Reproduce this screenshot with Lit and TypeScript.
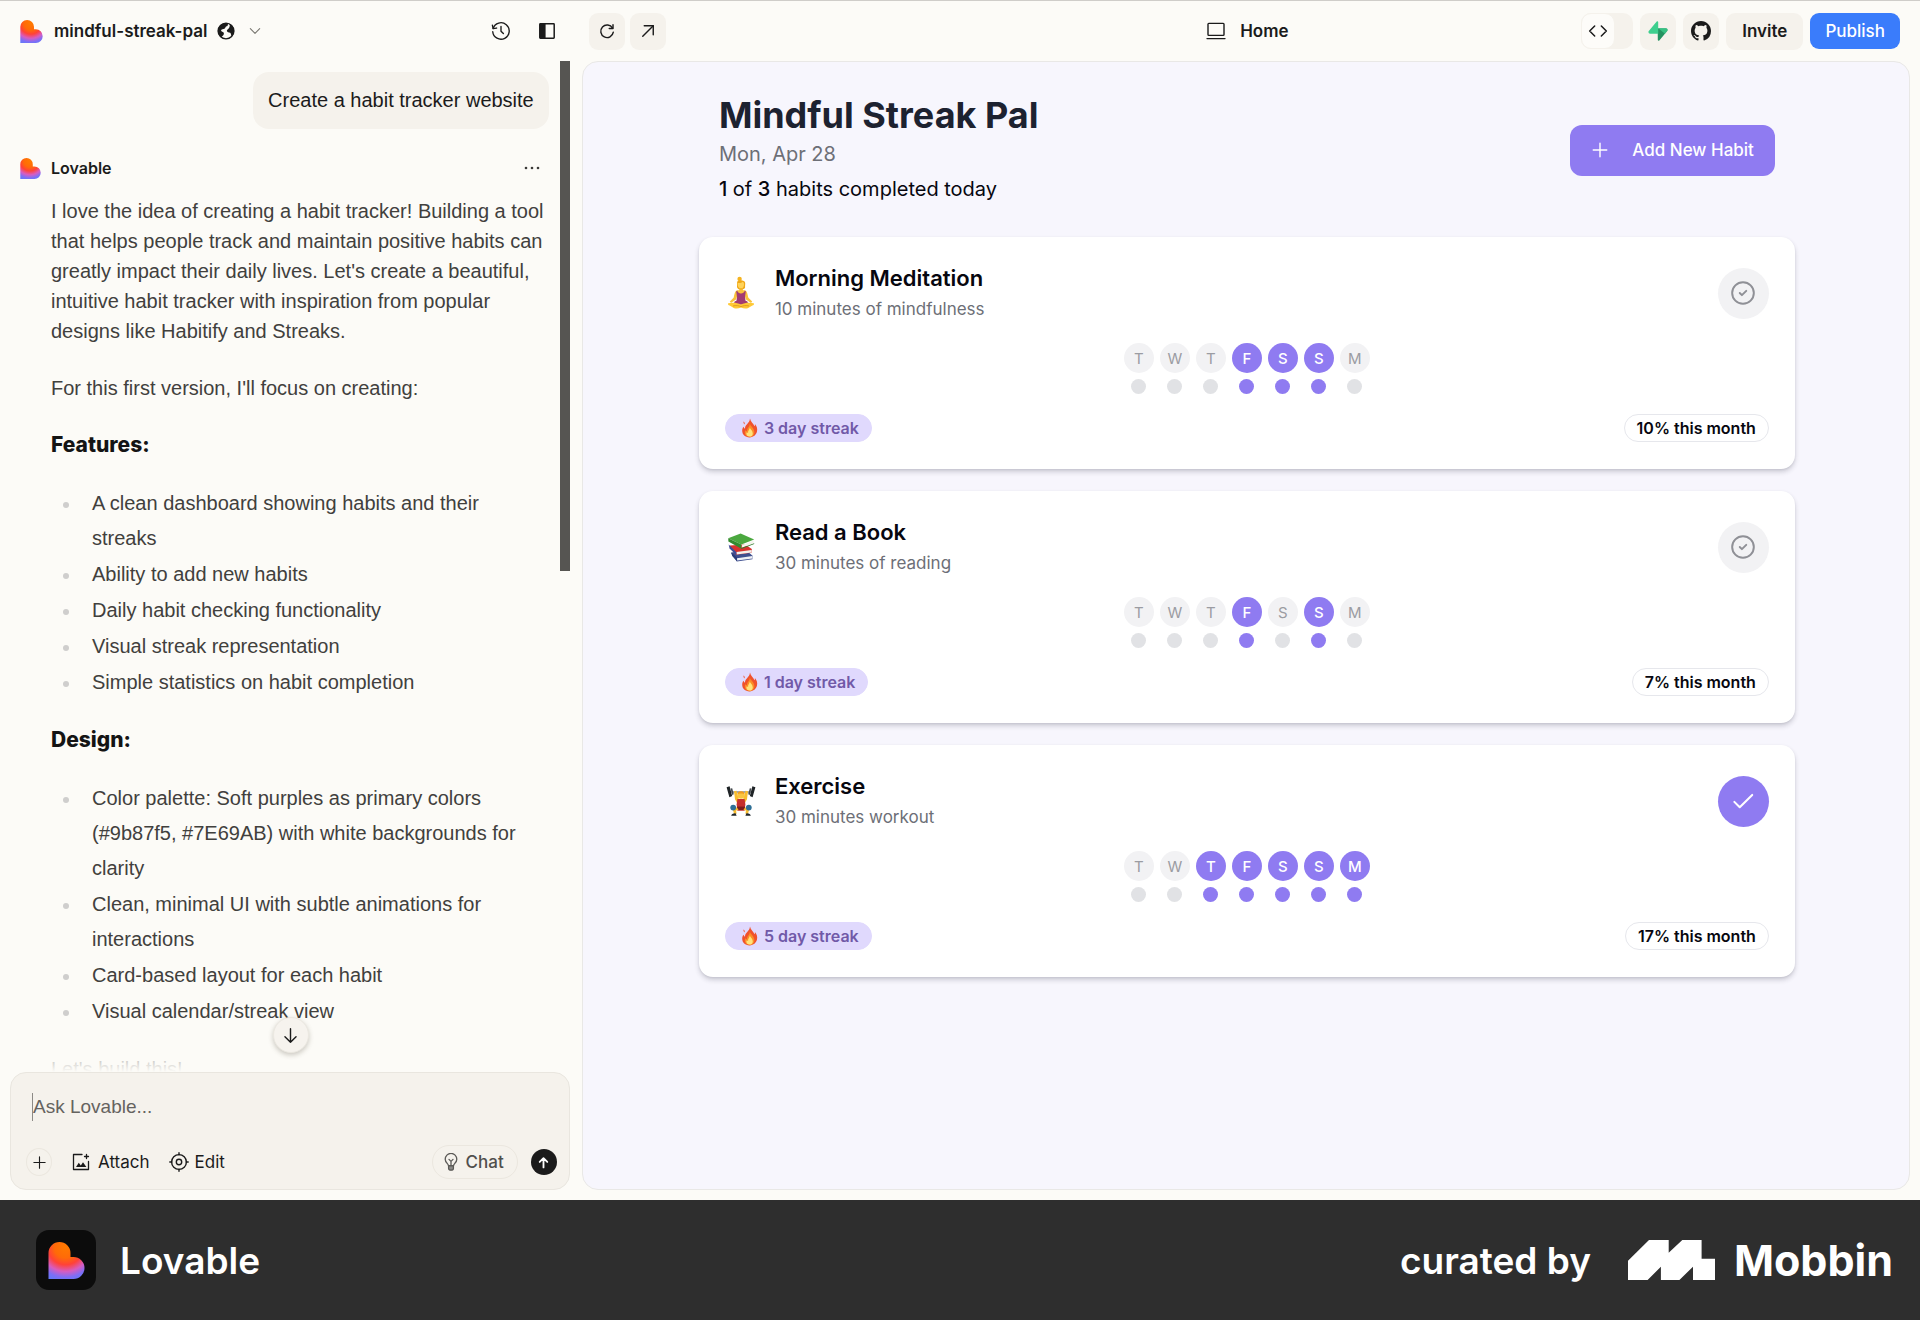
import { LitElement, html, css, svg } from "lit";
import { customElement, property, state } from "lit/decorators.js";
import { classMap } from "lit/directives/class-map.js";

interface Habit {
  icon: "yoga" | "books" | "lifter";
  name: string;
  detail: string;
  days: boolean[];
  streak: number;
  month: number;
  done: boolean;
}

const DAY_LETTERS = ["T", "W", "T", "F", "S", "S", "M"];

const toDays = (pattern: string) => [...pattern].map((c) => c === "x");

const HABITS: Habit[] = [
  { icon: "yoga", name: "Morning Meditation", detail: "10 minutes of mindfulness", days: toDays("...xxx."), streak: 3, month: 10, done: false },
  { icon: "books", name: "Read a Book", detail: "30 minutes of reading", days: toDays("...x.x."), streak: 1, month: 7, done: false },
  { icon: "lifter", name: "Exercise", detail: "30 minutes workout", days: toDays("..xxxxx"), streak: 5, month: 17, done: true },
];

const FEATURES = [
  "A clean dashboard showing habits and their streaks",
  "Ability to add new habits",
  "Daily habit checking functionality",
  "Visual streak representation",
  "Simple statistics on habit completion",
];

const DESIGN = [
  "Color palette: Soft purples as primary colors (#9b87f5, #7E69AB) with white backgrounds for clarity",
  "Clean, minimal UI with subtle animations for interactions",
  "Card-based layout for each habit",
  "Visual calendar/streak view",
];

const stroke = (size: number, body: unknown, width = 1.5) => html`
  <svg width=${size} height=${size} viewBox="0 0 24 24" fill="none" stroke="currentColor"
    stroke-width=${width} stroke-linecap="round" stroke-linejoin="round" aria-hidden="true">${body}</svg>`;

const icons = {
  globe: html`<svg width="18" height="18" viewBox="0 0 20 20" aria-hidden="true">
    <circle cx="10" cy="10" r="8.8" fill="none" stroke="#1b1b1b" stroke-width="1.5"/>
    <path fill="#1b1b1b" d="M10.2 1 C13.2 1.800 12.4 4.2 10.6 4.8 C9.2 5.4 9.4 6.800 8.2 7.6 C7 8.400 5.2 7.800 4.600 9.2 C4.2 10.4 5.6 10.6 6.6 11.2 C7.8 12 8 13.2 7.200 14.4 C6.600 15.4 5.600 15.6 5 17 C2.600 15.4 1 13 1 10 C1 5.2 5.400 .8 10.200 1 Z"/>
    <path fill="#1b1b1b" d="M14 2 C17 3.4 19 6.4 19 10 C19 12.4 18 14.600 16.600 16 C15.200 15 16 12.800 14.600 12 C13 11.200 11.400 11.600 11 10 C10.600 8.400 12.600 7.800 13.400 6.600 C14.200 5.400 14.400 3.600 14 2 Z"/>
  </svg>`,
  chevron: stroke(14, svg`<path d="M4 8l8 8 8-8"/>`, 1.8),
  history: stroke(22, svg`<path d="M3.4 9.2a9 9 0 1 1-.4 3.6"/><path d="M2.6 5.6l.8 3.8 3.8-.6"/><path d="M12 7v5.2l2.6 2.6"/>`),
  panel: html`<svg width="16" height="16" viewBox="0 0 16 16" aria-hidden="true">
    <rect x=".8" y=".8" width="14.4" height="14.4" rx=".6" fill="none" stroke="#1b1b1b" stroke-width="1.5"/>
    <path fill="#1b1b1b" d="M.8.8h5.8v14.4H.8z"/></svg>`,
  refresh: stroke(18, svg`<path d="M19.4 8.2A8.400 8.400 0 1 0 20.4 13.600"/><path d="M20 3.600v5h-5"/>`, 1.9),
  external: stroke(18, svg`<path d="M5 19L19 5"/><path d="M7 5h12v12"/>`, 1.9),
  laptop: html`<svg width="20" height="18" viewBox="0 0 20 18" fill="none" stroke="#1b1b1b" stroke-width="1.4" stroke-linecap="round" aria-hidden="true">
    <rect x="2" y="1.4" width="16" height="12" rx=".8"/><path d="M1 16.6h18"/></svg>`,
  code: stroke(20, svg`<path d="M8 6l-6 6 6 6M16 6l6 6-6 6"/>`, 1.8),
  supabase: html`<svg width="20" height="20" viewBox="0 0 20 20" aria-hidden="true">
    <path fill="#249361" d="M11.3 19.4c-.5.6-1.5.3-1.5-.5l-.1-11.6h8.2c1.4 0 2.2 1.6 1.3 2.7z"/>
    <path fill="#3ecf8e" d="M8.7 .6c.5-.6 1.5-.3 1.5 .5v11.6H2.1c-1.4 0-2.2-1.6-1.3-2.7z"/>
    <path fill="#3ecf8e" d="M10.2 7.3h7.7c1.4 0 2.2 1.6 1.3 2.700l-2.2 2.700z" opacity=".75"/></svg>`,
  github: html`<svg width="20" height="20" viewBox="0 0 16 16" fill="#1b1b1b" aria-hidden="true">
    <path d="M8 0C3.58 0 0 3.58 0 8c0 3.54 2.29 6.53 5.47 7.59.4.07.55-.17.55-.38 0-.19-.01-.82-.01-1.49-2.01.37-2.53-.49-2.69-.94-.09-.23-.48-.94-.82-1.13-.28-.15-.68-.52-.01-.53.63-.01 1.08.58 1.23.82.72 1.21 1.87.87 2.33.66.07-.52.28-.87.51-1.07-1.78-.2-3.64-.89-3.64-3.95 0-.87.31-1.59.82-2.15-.08-.2-.36-1.02.08-2.12 0 0 .67-.21 2.2.82.64-.18 1.32-.27 2-.27s1.36.09 2 .27c1.53-1.04 2.2-.82 2.2-.82.44 1.1.16 1.92.08 2.12.51.56.82 1.27.82 2.15 0 3.07-1.87 3.75-3.65 3.95.29.25.54.73.54 1.48 0 1.07-.01 1.93-.01 2.2 0 .21.15.46.55.38A8.01 8.01 0 0 0 16 8c0-4.42-3.58-8-8-8z"/></svg>`,
  down: stroke(19, svg`<path d="M12 3.500v17M5 13.500l7 7 7-7"/>`, 1.8),
  plusThin: stroke(15, svg`<path d="M12 3v18M3 12h18"/>`, 1.8),
  plus: stroke(18, svg`<path d="M12 3v18M3 12h18"/>`, 1.9),
  attach: html`<svg width="18" height="18" viewBox="0 0 18 18" fill="none" stroke="#1b1b1b" stroke-width="1.3" stroke-linecap="round" stroke-linejoin="round" aria-hidden="true">
    <path d="M10 1.5H1.5v15h15V8.5"/><path d="M14.5 1.5v4M12.5 3.5h4"/>
    <path fill="#1b1b1b" stroke="none" d="M4 14l2.8-4.2 2 2.6 2.2-3.2L14.4 14z"/></svg>`,
  target: html`<svg width="20" height="20" viewBox="0 0 20 20" fill="none" stroke="#1b1b1b" stroke-width="1.4" stroke-linecap="round" aria-hidden="true">
    <circle cx="10" cy="10" r="7.4"/><circle cx="10" cy="10" r="2.7"/>
    <path d="M10 .8v2M10 17.2v2M.8 10h2M17.2 10h2"/></svg>`,
  bulb: html`<svg width="14" height="18" viewBox="0 0 14 18" fill="none" stroke="#5b5a57" stroke-width="1.3" stroke-linecap="round" stroke-linejoin="round" aria-hidden="true">
    <path d="M4.4 12.600C4.4 10.8 1.2 9.6 1.2 6.2a5.8 5.8 0 0 1 11.6 0c0 3.4-3.2 4.6-3.2 6.4z"/>
    <path fill="#8b8a87" d="M4.6 12.8h4.8v2.6c0 1-1 1.8-2.4 1.8s-2.4-.8-2.4-1.8z"/><path d="M5 6.4l2 2 2-2M7 8.4v4"/></svg>`,
  send: stroke(13, svg`<path d="M12 21V4M5 11l7-7 7 7"/>`, 3.4),
  check: stroke(26, svg`<path d="M4 12.8l5 5L20.5 6.4"/>`, 1.9),
  circleCheck: stroke(26, svg`<circle cx="12" cy="12" r="10"/><path d="M9 12l2 2 4-4"/>`, 1.8),
  flame: html`<svg width="17" height="20" viewBox="0 0 17 20" aria-hidden="true">
    <path fill="#f0522c" d="M9 .6c.6 3.2 3.2 4.8 4.6 7.6.4-.6.5-1.4.3-2.2 2 2 2.7 5 2.1 7.6C15.2 17 12.4 19.4 8.6 19.4 4.2 19.4 1.2 16.6 1.2 12.8c0-1.6.5-3 1.3-4 .3 1 .8 1.6 1.5 2C3.8 6.8 8.6 5.6 9 .6z"/>
    <path fill="#fb8c26" d="M8.8 5.6c.4 2.8 4.6 4.4 4.6 8.6 0 2.8-2 4.8-4.8 4.8-2.8 0-4.8-1.8-4.8-4.4 0-1 .2-1.8.6-2.4.5.7 1 .9 1.600 1C5.8 10.4 8.8 9 8.8 5.6z"/>
    <path fill="#ffe37a" d="M8.8 9.6c.3 1.600 3 3 3 5.8 0 2-1.2 3.200-3.200 3.200S5.400 17.400 5.400 15.800c0-.6.1-1.200.4-1.600.4.4.8.5 1.300.5-.3-2 1.500-2.900 1.700-5.100z"/>
    <path fill="#f0522c" d="M2.6 3.6c.9.8 1.4 1.7 1 2.8-.9-.5-1.3-1.6-1-2.8z"/></svg>`,
  mobbin: html`<svg width="87" height="40" viewBox="0 0 87 40" fill="#fff" aria-hidden="true">
    <path d="M0 20.7L21 0H40.7V12.7L54.3 0H73.6V18.7H87V40H65V26.7L51.4 40H32.9V26.7L19.6 40H0z"/></svg>`,
};

const emoji = {
  yoga: html`<svg width="28" height="34" viewBox="0 0 28 34" role="img" aria-label="Meditation">
    <circle cx="12.6" cy="2.9" r="2.2" fill="#f5b31f"/>
    <path fill="#f0a818" d="M10 6.5c0-3 8-3.2 8.2.6l-.2 5c-1.2 1.4-2.6 1.6-4 1.6-2 0-4-1.2-4-3z"/>
    <path fill="#ffd35a" d="M10.6 6.8c1.8.6 4.2 0 5.2-1 .8.6 1.2 1.4 1.2 2.6 0 2.6-1.4 4.2-3 4.2s-3.2-1.6-3.4-4z"/>
    <path fill="#f3b52c" d="M12.4 12h3.4v3.2h-3.4z"/>
    <path fill="#f9c23c" d="M9.6 14.6c1.8-.8 7-.8 8.8 0 2 1 2.2 4.6 3 7.2l3.8 3.6-1.2 1.6-5-3.6-1.6-4.2h-6.8L9 23.4 4 27l-1.2-1.6 3.8-3.6c.8-2.6 1-6.2 3-7.2z"/>
    <path fill="#a23b72" d="M10.2 14.8c.8 1.8 1.8 2.6 3.8 2.6s3-.8 3.8-2.6l1 .4-.8 5.8.8 5.6H9.2l.8-5.6-.8-5.8z"/>
    <path fill="#a23b72" d="M7.6 25.4c2-1.2 10.8-1.2 12.8 0l1 3.4H6.600z"/>
    <path fill="#ffc935" d="M1.2 27.2c3.4-.8 8.6-1 12.8 1.2 4.2-2.2 9.4-2 12.8-1.2.6 1.2-.2 2-1.4 2.2l-4.6 2.8c-2.4.8-4.8.2-6.8-.6-2 .8-4.4 1.4-6.8.6l-4.6-2.8c-1.2-.2-2-1-1.4-2.2z"/>
    <path fill="none" stroke="#d9901a" stroke-width=".8" d="M6 30c3-.8 6-.4 8 .8 2-1.2 5-1.6 8-.8"/></svg>`,
  books: html`<svg width="30" height="30" viewBox="0 0 28 30" role="img" aria-label="Books">
    <path fill="#3e4f8f" d="M4.200 20.400l15-2.200 6.400 5.600-.2 3.400-15.6 2.200L4.600 22z"/>
    <path fill="#eef0f4" d="M10 26.2l15.4-2.200v2.400L10.200 28.600z"/>
    <path fill="#2d3c78" d="M4.200 20.400l5.800 5.200v3.600L5.200 24z"/>
    <path fill="#d8322e" d="M2.800 13.400l15.400-1 6.600 4.600-.2 3.800-15.4 2-6.400-6.600z"/>
    <path fill="#f3f1ec" d="M9.4 20l15.2-2v2.400L9.600 22.600z"/>
    <path fill="#3b4d9a" d="M1.600 12.600l7.800 7.600v2.800L2.600 16.400z"/>
    <path fill="#4ba83f" d="M1.2 6.200L13.600 1.400l13.6 6.200-12.8 5z"/>
    <path fill="#338a2f" d="M1.2 6.200l13.200 6.400v4.200L1.400 9.600z"/>
    <path fill="#f5f4ee" d="M14.8 13.200l12-4.600-.4 2.600-11.6 4.600z"/>
    <path fill="#2f7d2b" d="M14.4 16l12.8-4.800v.8l-12.8 5z"/></svg>`,
  lifter: html`<svg width="30" height="32" viewBox="0 0 30 32" role="img" aria-label="Weight lifting">
    <path stroke="#6d7175" stroke-width="1.2" d="M3 7h24"/>
    <path fill="#1f2427" d="M.6 2.2l3-1 2.6 9.8-2.8 1.2zM29.4 2.2l-3-1-2.6 9.800 2.8 1.200z"/>
    <path fill="#43484c" d="M4.6 3.4l1.6-.2 1.6 6-1.6.8zM25.4 3.4l-1.6-.2-1.6 6 1.6.8z"/>
    <path fill="#f8bd2e" d="M8 6.2l2.4-.4 2.6 9-2 3-2-3.6zM22 6.2l-2.400-.4-2.6 9 2 3 2-3.6z"/>
    <circle cx="15" cy="10.2" r="3.6" fill="#f9c440"/>
    <path fill="#f09a1e" d="M11.4 9.6c0-4.4 7.2-4.4 7.2 0-1.4-1.4-5.8-1.4-7.2 0z"/>
    <path fill="#c4302b" d="M11.4 14h7.2l.8 5.4-.8 6.4h-7.2l-.8-6.4z"/>
    <path fill="#7b1d1c" d="M11 21.6h8v3.4h-8z"/>
    <path fill="#f8bd2e" d="M11 22.4l-4.6.4 1.6 6h2.6l-.6-3.4 2.6-.4zM19 22.4l4.6.4-1.6 6h-2.6l.6-3.4-2.6-.4z"/>
    <circle cx="7.2" cy="22.6" r="2.9" fill="#2e6f95"/><circle cx="22.8" cy="22.6" r="2.9" fill="#2e6f95"/>
    <path fill="#22282c" d="M5.2 30.8c.2-1.8 2-2.8 4.4-2.6l1 2.6zM24.8 30.8c-.2-1.8-2-2.8-4.4-2.6l-1 2.6z"/></svg>`,
};

const heart = (id: string, size: number) => html`
  <svg width=${size} height=${size} viewBox="0 0 36 37" aria-hidden="true">
    <defs><radialGradient id=${id} gradientUnits="userSpaceOnUse" cx="17" cy="5" r="37">
      <stop offset="0" stop-color="#ff7a00"/><stop offset=".3" stop-color="#ff6a08"/>
      <stop offset=".48" stop-color="#ff4238"/><stop offset=".66" stop-color="#d85cc0"/>
      <stop offset=".82" stop-color="#7d6ef6"/><stop offset="1" stop-color="#5a7dfa"/>
    </radialGradient></defs>
    <path fill="url(#${id})" d="M0 11a11 11 0 0 1 22 0v4h3a11 11 0 0 1 0 22H0z"/></svg>`;

@customElement("habit-card")
export class HabitCard extends LitElement {
  @property({ attribute: false }) habit!: Habit;

  static styles = css`
    :host { display: block; font-family: Inter, "Liberation Sans", sans-serif; }
    * { box-sizing: border-box; }
    svg { display: block; flex: none; }
    .card {
      display: flex; flex-direction: column; padding: 25px 26px 27px;
      background: #fff; border-radius: 14px; color: #07070f;
      box-shadow: 0 3px 5px rgba(40, 38, 60, .2), 0 1px 2px rgba(40, 38, 60, .08);
    }
    .head { display: flex; align-items: center; gap: 18px; }
    .icon { display: grid; place-items: center; width: 32px; height: 36px; }
    .text { flex: 1; }
    .name { margin: 0; font-size: 22px; font-weight: 600; line-height: 32px; }
    .detail { margin: 0; font-size: 17px; line-height: 30px; color: #6d6f77; }
    .toggle {
      display: grid; place-items: center; width: 51px; height: 51px; padding: 0;
      border: 0; border-radius: 50%; background: #f2f2f4; color: #8f9096; cursor: pointer;
    }
    .toggle.done { background: #8f7bf1; color: #fff; }
    .week { display: flex; justify-content: center; gap: 6px; margin: 19px 0 20px; padding: 0; list-style: none; }
    .day { display: flex; flex-direction: column; align-items: center; gap: 6px; }
    .letter {
      display: grid; place-items: center; width: 30px; height: 30px;
      border-radius: 50%; background: #f2f2f4; color: #9b9ca2; font-size: 15px;
    }
    .dot { width: 15px; height: 15px; border-radius: 50%; background: #e1e2e5; }
    .on .letter { background: #8f7bf1; color: #fff; font-weight: 500; }
    .on .dot { background: #8f7bf1; }
    .foot { display: flex; justify-content: space-between; }
    .badge {
      display: flex; align-items: center; gap: 6px; height: 28px; padding: 0 12px;
      border: 1px solid #e6e7ec; border-radius: 14px; font-size: 16px; font-weight: 600;
    }
    .streak { padding: 0 12px 0 15px; border-color: #e0d9fd; background: #e0d9fd; color: #7159a8; }
  `;

  render() {
    const h = this.habit;
    return html`
      <article class="card">
        <div class="head">
          <span class="icon">${emoji[h.icon]}</span>
          <div class="text"><h2 class="name">${h.name}</h2><p class="detail">${h.detail}</p></div>
          <button class=${classMap({ toggle: true, done: h.done })} aria-label="Mark as done" aria-pressed=${h.done}>
            ${h.done ? icons.check : icons.circleCheck}
          </button>
        </div>
        <ul class="week">
          ${h.days.map((on, i) => html`
            <li class=${classMap({ day: true, on })}><span class="letter">${DAY_LETTERS[i]}</span><span class="dot"></span></li>`)}
        </ul>
        <div class="foot">
          <span class="badge streak">${icons.flame}${h.streak} day streak</span>
          <span class="badge">${h.month}% this month</span>
        </div>
      </article>`;
  }
}

@customElement("app-root")
export class AppRoot extends LitElement {
  @state() private habits = HABITS;

  static styles = css`
    :host {
      display: flex; flex-direction: column; height: 100vh; overflow: hidden;
      background: #fcfbf7; color: #1b1b1b; font-family: Inter, "Liberation Sans", sans-serif;
    }
    * { box-sizing: border-box; }
    svg { display: block; flex: none; }
    button { font: inherit; color: inherit; border: 0; padding: 0; background: none; cursor: pointer; }
    .app {
      flex: 1; min-height: 0; display: grid; border-top: 1px solid #cfcdc9;
      grid-template-columns: minmax(420px, 30.3%) minmax(0, 1fr);
      grid-template-rows: 60px minmax(0, 1fr);
    }

    .bar { display: flex; align-items: center; font-size: 17px; font-weight: 600; }
    .bar-left { padding: 0 27px 0 20px; gap: 27px; }
    .project { display: flex; align-items: center; gap: 9px; margin-right: auto; }
    .project .title-text { margin-left: 2px; }
    .project .chev { margin-left: 4px; color: #77756f; }
    .bar-right { display: grid; grid-template-columns: 1fr auto 1fr; padding: 0 20px 0 7px; }
    .group { display: flex; gap: 5px; }
    .group.end { justify-content: flex-end; gap: 7px; }
    .sq { display: grid; place-items: center; width: 36px; height: 37px; border-radius: 9px; background: #f5f2ec; }
    .page { display: flex; align-items: center; gap: 14px; padding-left: 6px; }
    .switch { width: 52px; height: 36px; border-radius: 10px; background: #f5f2ec; }
    .switch .knob { display: grid; place-items: center; width: 34px; height: 36px; border: 1px solid #f5f2ec; border-radius: 10px; background: #fdfcf9; }
    .pill { height: 37px; padding: 0 16px; border-radius: 9px; background: #f5f2ec; font-weight: 600; }
    .publish { height: 36px; padding: 0 15px; background: #3a7cfb; color: #fff; font-weight: 500; }

    .side { display: flex; flex-direction: column; min-height: 0; position: relative; padding-bottom: 10px; }
    .chat { flex: 1; min-height: 0; overflow: hidden; padding: 11px 33px 0 20px; position: relative; }
    .thumb { position: absolute; top: 0; right: 12px; width: 10px; height: 510px; background: #565552; }
    .bubble {
      width: fit-content; margin: 0 0 24px auto; padding: 13px 15px 14px; border-radius: 16px;
      background: #f5f2ec; font: 20px/30px "Liberation Sans", Arial, sans-serif;
    }
    .author { display: flex; align-items: center; gap: 10px; height: 30px; padding-right: 9px; font-size: 16px; font-weight: 600; }
    .author .more { margin-left: auto; }
    .prose { padding: 13px 0 0 31px; font: 20px/30px "Liberation Sans", Arial, sans-serif; color: #41403d; }
    .prose p { margin: 0 0 27px; }
    .prose h3 { margin: 0 0 26px; font: 800 21px/30px Inter, sans-serif; color: #141414; }
    .prose ul { display: grid; gap: 1px; margin: 0 0 25px; padding: 0 0 0 12px; list-style: none; }
    .prose li { display: flex; gap: 23px; line-height: 35px; }
    .prose li::before { content: ""; flex: none; width: 6px; height: 6px; margin-top: 16px; border-radius: 50%; background: #cfcecd; }
    .fade { position: absolute; left: 0; right: 12px; bottom: 0; height: 40px; background: linear-gradient(rgba(252, 251, 247, 0), rgba(252, 251, 247, .75) 70%, #fcfbf7); }
    .jump {
      position: absolute; left: 50%; bottom: 147px; transform: translateX(-50%);
      display: grid; place-items: center; width: 36px; height: 36px; border-radius: 50%;
      background: #f6f3ee; border: 1px solid #ebe8e1; box-shadow: 0 2px 5px rgba(60, 50, 30, .25);
    }
    .composer {
      display: flex; flex-direction: column; justify-content: space-between;
      height: 118px; margin: 0 12px 0 10px; padding: 20px 12px 10px 15px;
      border: 1px solid #e9e6df; border-radius: 16px; background: #f5f2ec;
    }
    .ask {
      margin-left: 6px; height: 28px; padding: 0; border: 0; border-left: 1px solid #8c8a86; outline: none;
      background: none; font: 19px/28px "Liberation Sans", Arial, sans-serif; color: #1b1b1b;
    }
    .ask::placeholder { color: #65635f; opacity: 1; }
    .tools { display: flex; align-items: center; font-size: 17px; }
    .tools button { display: flex; align-items: center; gap: 8px; }
    .tools .add { justify-content: center; width: 26px; height: 28px; margin-right: 20px; border: 1px solid #ebe7df; border-radius: 50%; }
    .tools .attach { margin-right: 19px; }
    .tools .edit { gap: 6px; }
    .tools .chatmode { height: 34px; margin: 0 13px 0 auto; padding: 0 13px 0 11px; border: 1px solid #ebe7df; border-radius: 17px; font-weight: 500; color: #504f4c; }
    .tools .send { justify-content: center; width: 26px; height: 26px; border-radius: 50%; background: #1b1b1b; color: #fff; }

    .frame {
      margin: 0 10px 10px 0; padding: 29px 31px 0 33px; border: 1px solid #e9e8e6; border-radius: 16px;
      background: #f7f6fd; overflow: hidden; min-height: 0;
    }
    .content { max-width: 1096px; margin: 0 auto; }
    .top { display: flex; align-items: center; justify-content: space-between; padding: 0 20px; margin-bottom: 28px; }
    .title { margin: 0; font-size: 36px; font-weight: 700; line-height: 48px; color: #1d2230; }
    .date { margin: 0; font-size: 20px; line-height: 30px; color: #6d6f77; }
    .progress { margin: 0; font-size: 20px; line-height: 40px; color: #07070f; }
    .progress b { font-weight: 500; }
    .new { display: flex; align-items: center; gap: 23px; height: 51px; padding: 0 21px; border-radius: 12px; background: #8f7bf1; color: #fff; font-size: 17px; font-weight: 500; }
    .cards { display: grid; gap: 22px; }

    .credit {
      display: flex; align-items: center; height: 120px; padding: 0 27px 0 36px;
      background: #2e2e2e; color: #fff; font-size: 37px; font-weight: 600;
    }
    .tile { display: grid; place-items: center; width: 60px; height: 60px; margin-right: 24px; border-radius: 13px; background: #0c0c0c; }
    .by { margin: 0 37px 0 auto; }
    .brand { margin-left: 19px; font-size: 43px; font-weight: 700; }
  `;

  private list(items: string[]) {
    return html`<ul>${items.map((t) => html`<li><span>${t}</span></li>`)}</ul>`;
  }

  render() {
    const done = this.habits.filter((h) => h.done).length;
    return html`
      <div class="app">
        <header class="bar bar-left">
          <button class="project">${heart("heart-bar", 23)}<span class="title-text">mindful-streak-pal</span>${icons.globe}<span class="chev">${icons.chevron}</span></button>
          <button aria-label="History">${icons.history}</button>
          <button aria-label="Toggle panel">${icons.panel}</button>
        </header>
        <header class="bar bar-right">
          <div class="group">
            <button class="sq" aria-label="Refresh">${icons.refresh}</button>
            <button class="sq" aria-label="Open in new tab">${icons.external}</button>
          </div>
          <button class="page">${icons.laptop}<span>Home</span></button>
          <div class="group end">
            <button class="switch" aria-label="Code view"><span class="knob">${icons.code}</span></button>
            <button class="sq" aria-label="Supabase">${icons.supabase}</button>
            <button class="sq" aria-label="GitHub">${icons.github}</button>
            <button class="pill">Invite</button>
            <button class="pill publish">Publish</button>
          </div>
        </header>

        <section class="side">
          <div class="chat">
            <div class="bubble">Create a habit tracker website</div>
            <div class="author">${heart("heart-msg", 21)}<span>Lovable</span>
              <button class="more" aria-label="More">
                <svg width="16" height="4" viewBox="0 0 16 4" fill="#3b3a38"><circle cx="2" cy="2" r="1.3"/><circle cx="8" cy="2" r="1.3"/><circle cx="14" cy="2" r="1.3"/></svg>
              </button>
            </div>
            <div class="prose">
              <p>I love the idea of creating a habit tracker! Building a tool that helps people track and maintain positive habits can greatly impact their daily lives. Let's create a beautiful, intuitive habit tracker with inspiration from popular designs like Habitify and Streaks.</p>
              <p>For this first version, I'll focus on creating:</p>
              <h3>Features:</h3>
              ${this.list(FEATURES)}
              <h3>Design:</h3>
              ${this.list(DESIGN)}
              <p>Let's build this!</p>
            </div>
            <div class="thumb"></div>
            <div class="fade"></div>
          </div>
          <form class="composer" @submit=${(e: Event) => e.preventDefault()}>
            <input class="ask" aria-label="Message" placeholder="Ask Lovable..." />
            <div class="tools">
              <button type="button" class="add" aria-label="Add">${icons.plusThin}</button>
              <button type="button" class="attach">${icons.attach}Attach</button>
              <button type="button" class="edit">${icons.target}Edit</button>
              <button type="button" class="chatmode">${icons.bulb}Chat</button>
              <button class="send" aria-label="Send">${icons.send}</button>
            </div>
          </form>
          <button class="jump" aria-label="Scroll to bottom">${icons.down}</button>
        </section>

        <main class="frame">
          <div class="content">
            <div class="top">
              <div>
                <h1 class="title">Mindful Streak Pal</h1>
                <p class="date">Mon, Apr 28</p>
                <p class="progress"><b>${done}</b> of <b>${this.habits.length}</b> habits completed today</p>
              </div>
              <button class="new">${icons.plus}Add New Habit</button>
            </div>
            <div class="cards">
              ${this.habits.map((h) => html`<habit-card .habit=${h}></habit-card>`)}
            </div>
          </div>
        </main>
      </div>

      <footer class="credit">
        <span class="tile">${heart("heart-tile", 37)}</span><span>Lovable</span>
        <span class="by">curated by</span>${icons.mobbin}<span class="brand">Mobbin</span>
      </footer>`;
  }
}
